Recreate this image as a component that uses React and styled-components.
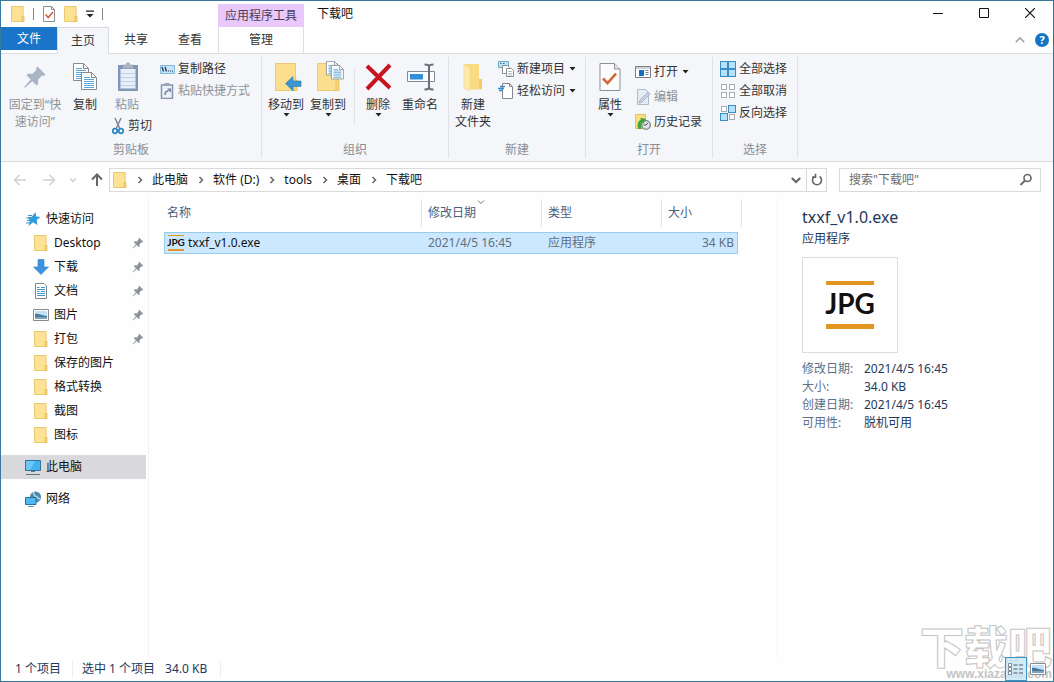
import React, { useState } from 'react';
import styled, { createGlobalStyle } from 'styled-components';

/* ---------- icons ---------- */

const Folder = ({ w = 14, h = 16 }) => (
  <svg width={w} height={h} viewBox="0 0 14 16">
    <path d="M.5 .5h11.6v15H.5z" fill="#fbe294" stroke="#e8c970" />
    <path d="M11 10.5h2v5h-2z" fill="#fbdc80" stroke="#e0b850" strokeWidth=".8" />
  </svg>
);

const BigFolder = ({ children }) => (
  <svg width="32" height="32" viewBox="0 0 32 32">
    <path d="M5.5 2.5h20v27h-20z" fill="#fbdf8c" stroke="#ecc974" />
    <path d="M24 19h3v10.500h-3z" fill="#f9d775" stroke="#e3bd60" strokeWidth=".8" />
    {children}
  </svg>
);

const CheckDoc = ({ big }) => (
  <svg width={big ? 32 : 14} height={big ? 32 : 16} viewBox={big ? '0 0 24 32' : '0 0 14 16'}>
    {big ? (
      <>
        <path d="M2 2.500h14.500L22 8v21.500H2z" fill="#fcfcfd" stroke="#8c8f93" />
        <path d="M16.500 2.500V8H22" fill="#e5e7ea" stroke="#8c8f93" />
        <path d="M5 17.500l4.500 4.700 8.500-9.500" fill="none" stroke="#cf6a3c" strokeWidth="2.600" />
      </>
    ) : (
      <>
        <path d="M1.500 .5h8l3 3v12h-11z" fill="#fff" stroke="#8a8d91" />
        <path d="M9.500 .5v3h3" fill="none" stroke="#8a8d91" />
        <path d="M3.500 8.500l2.700 3 4.800-5.500" fill="none" stroke="#d2603a" strokeWidth="1.700" />
      </>
    )}
  </svg>
);

const Caret = () => (
  <svg width="7" height="4" viewBox="0 0 7 4">
    <path d="M.5 0h6l-3 3.500z" fill="#222" />
  </svg>
);

const Chevron = ({ dir = 'right', color = '#666', size = 10, stroke = 1.5 }) => {
  const turn = { right: 0, down: 90, left: 180, up: 270 }[dir];
  return (
    <svg width={size} height={size} viewBox="0 0 10 10" fill="none" stroke={color} strokeWidth={stroke}>
      <path d="M3.500 2l3 3-3 3" transform={`rotate(${turn} 5 5)`} />
    </svg>
  );
};

const Arrow = ({ dir = 'left', color, stroke = 1.5 }) => {
  const turn = { left: 0, up: 90, right: 180 }[dir];
  return (
    <svg width="14" height="14" viewBox="0 0 14 14" fill="none" stroke={color} strokeWidth={stroke}>
      <path d="M13 7H1.500M6.500 2L1.500 7l5 5" transform={`rotate(${turn} 7 7)`} />
    </svg>
  );
};

const Pin = ({ size = 12, color = '#8b939d' }) => (
  <svg width={size} height={size} viewBox="0 0 12 12">
    <path
      d="M7.300 .8L11.200 4.700l-.8 .8-.9-.2-2 2.100 .2 1.900-.9 .9-2.100-2.100L1 11.400.6 11l3.300-3.700-2.100-2.100 .9-.9 1.900.2L6.700 2.500l-.2-.9z"
      fill={color}
    />
  </svg>
);

const Sheet = ({ x, y, s = 1 }) => (
  <g transform={`translate(${x} ${y}) scale(${s})`}>
    <path d="M.5 .5h10l5 5v12H.5z" fill="#fff" stroke="#858a90" />
    <path d="M10.500 .5v5h5" fill="none" stroke="#858a90" />
    <path d="M3 5.500h6M3 7.500h10M3 9.500h10M3 11.500h10M3 13.500h10M3 15.500h10" stroke="#5ba6d8" />
  </g>
);

const Copy = () => (
  <svg width="32" height="32" viewBox="0 0 32 32">
    <Sheet x={4} y={2} />
    <Sheet x={12} y={11} />
  </svg>
);

const Clipboard = () => (
  <svg width="32" height="32" viewBox="0 0 32 32">
    <path d="M7.500 4.500h19v25h-19z" fill="#8298bb" stroke="#7f93b6" />
    <path d="M9.500 8h15v19.500h-15z" fill="#e9eff8" />
    <path d="M10 12.500h14M10 16.500h14M10 20.500h14M10 24.500h14" stroke="#c3d0e4" />
    <path d="M12 3.500h3c0-3 4-3 4 0h3v4H12z" fill="#a9b2c0" />
  </svg>
);

const Scissors = () => (
  <svg width="16" height="18" viewBox="0 0 16 18" fill="none">
    <path d="M6 1l5 11M12 1L7 12" stroke="#7b8793" strokeWidth="1.500" />
    <ellipse cx="6" cy="14" rx="2.200" ry="2.300" stroke="#2c86c0" strokeWidth="1.700" />
    <ellipse cx="12" cy="14" rx="2.200" ry="2.300" stroke="#2c86c0" strokeWidth="1.700" />
  </svg>
);

const PathIcon = () => (
  <svg width="16" height="16" viewBox="0 0 16 16">
    <path d="M1.500 4.500h14v8h-14z" fill="#c3e4f8" stroke="#84b6d8" />
    <path d="M3 6l1.500 4.500M6 6l1.500 4.500" stroke="#223b52" strokeWidth="1.300" />
    <path d="M9 10h1M11 10h1M13 10h1" stroke="#223b52" />
  </svg>
);

const PasteLink = () => (
  <svg width="16" height="16" viewBox="0 0 16 16">
    <path d="M2.500 2h11v13.500h-11z" fill="#eef2f8" stroke="#8494b0" strokeWidth="1.500" />
    <path d="M5.500 0h5v3h-5z" fill="#9aa5b6" />
    <path d="M6 12c0-3 1-4 3.500-4" fill="none" stroke="#6b7f9f" strokeWidth="1.500" />
    <path d="M8 5.500h4v4.200z" fill="#6b7f9f" />
  </svg>
);

const MoveTo = () => (
  <BigFolder>
    <path d="M15.500 22.500l7.500-7v4.500h8v5.500h-8V30z" fill="#3d94d1" stroke="#2d7fba" strokeWidth=".6" />
  </BigFolder>
);

const CopyTo = () => (
  <BigFolder>
    <Sheet x={14} y={0} s={0.8} />
    <Sheet x={19} y={4} s={0.8} />
  </BigFolder>
);

const Delete = () => (
  <svg width="32" height="32" viewBox="0 0 32 32">
    <path d="M5 5L28 27M28 4L5 28" stroke="#c81420" strokeWidth="4" fill="none" />
  </svg>
);

const Rename = () => (
  <svg width="32" height="32" viewBox="0 0 32 32" fill="none">
    <path d="M3.500 10.500h27v10h-27z" fill="#fafcfe" stroke="#7f8c98" />
    <path d="M6 13h13v5.500H6z" fill="#2f8fd8" />
    <path d="M20.500 3.500c3 0 4 .5 4.500 1.500.5-1 1.500-1.500 4.500-1.500M25 5v22M20.500 28.500c3 0 4-.5 4.500-1.500.5 1 1.500 1.500 4.500 1.500" stroke="#6b7075" strokeWidth="2" />
  </svg>
);

const NewFolder = () => (
  <svg width="32" height="32" viewBox="0 0 32 32">
    <path d="M8 3h14v21l3 .5v4H8z" fill="#fadb83" />
    <path d="M22 18h3v10h-3z" fill="#f3ca66" />
    <path d="M7 3l6 4v23l-6-3z" fill="#fdebad" stroke="#f1d58a" strokeWidth=".6" />
  </svg>
);

const NewItem = () => (
  <svg width="16" height="18" viewBox="0 0 16 18">
    <path d="M.5 1.500h10v6H.5z" fill="#bfe3f8" stroke="#6fa4c4" />
    <path d="M2 3.500h1.500M5 3.500h1.500" stroke="#2b6f9d" />
    <path d="M4.500 5.500h5l2 2v6h-7z" fill="#fff" stroke="#8b9095" />
    <path d="M8.500 8.500h5l2 2v6h-7z" fill="#fff" stroke="#8b9095" />
    <path d="M10 11.500h4M10 13.500h4M10 15.200h4" stroke="#a7adb3" strokeWidth=".8" />
  </svg>
);

const EasyAccess = () => (
  <svg width="16" height="16" viewBox="0 0 16 16">
    <path d="M4.500 .5h7l3 3v12h-10z" fill="#fff" stroke="#85898e" />
    <path d="M11.500 .5v3h3" fill="none" stroke="#85898e" />
    <path d="M2 3.500h5M0 5.500h6M1 7.500h4" stroke="#3c87c4" strokeWidth="1.300" />
  </svg>
);

const OpenIcon = () => (
  <svg width="16" height="14" viewBox="0 0 16 14">
    <path d="M.5 1.500h15v11H.5z" fill="#fff" stroke="#777d83" />
    <path d="M1 3h14" stroke="#a4a9ae" />
    <path d="M4 5h5v6H4z" fill="#1470b8" />
    <path d="M10.500 5.500h3M10.500 7.500h3M10.500 9.500h3" stroke="#6b8ba5" />
  </svg>
);

const EditIcon = () => (
  <svg width="16" height="16" viewBox="0 0 16 16">
    <path d="M2.500 .5h8l3 3v12h-11z" fill="#e6ecf6" stroke="#afb9ca" />
    <path d="M4 14l1-3 8-8 2 2-8 8z" fill="#c8d2e4" stroke="#9dabc4" strokeWidth=".8" />
  </svg>
);

const HistoryIcon = () => (
  <svg width="16" height="16" viewBox="0 0 16 16">
    <path d="M.5 .5h10v14H.5z" fill="#fadf83" stroke="#e2c263" />
    <circle cx="11" cy="11" r="4.300" fill="#dfe3e6" stroke="#7c8389" strokeWidth="1.300" />
    <path d="M11 11l2-2M11 11H8.500" stroke="#555" />
    <path d="M3.500 15C1.500 11 3 7 6 5.500L5 4l6 .8-2.500 5L7.500 8c-2 1.500-2 4-.8 7z" fill="#3fa33e" />
  </svg>
);

const SelectIcon = ({ on }) => (
  <svg width="16" height="16" viewBox="0 0 16 16">
    {[[0.5, 0.5], [8.5, 0.5], [0.5, 8.5], [8.5, 8.5]].map(([x, y], i) => (
      <rect
        key={i}
        x={x + (on[i] ? 0 : 1)}
        y={y + (on[i] ? 0 : 1)}
        width={on[i] ? 7 : 5}
        height={on[i] ? 7 : 5}
        fill={on[i] ? '#b5e2fa' : '#fff'}
        stroke={on[i] ? '#3a8dc4' : '#a9adb2'}
      />
    ))}
  </svg>
);

const Star = () => (
  <svg width="16" height="16" viewBox="0 0 16 16">
    <path d="M10.500 1l.6 4.500 4.400.6-3.800 3 .6 5-4.300-2.800L3.500 15l1.500-5.500L2.500 6.600l4.300-.8z" fill="#2f9cdf" />
    <path d="M3 4.500h4M1.500 7h4M2 9.500h3M1 12h4" stroke="#3b92cc" />
  </svg>
);

const Download = () => (
  <svg width="16" height="16" viewBox="0 0 16 16">
    <path d="M5 .5h6V8h4.500L8 15.500.5 8H5z" fill="#3c92de" stroke="#2f7fc6" strokeWidth=".6" />
  </svg>
);

const DocIcon = () => (
  <svg width="16" height="16" viewBox="0 0 16 16">
    <path d="M2.500 .5h8.500l2.500 2.500v12.500h-11z" fill="#fff" stroke="#7f868d" />
    <path d="M8 4.500h4M4 4.500h2.500M4 6.500h8M8 8.500h4M4 8.500h2.500M4 10.500h8M4 12.500h8" stroke="#3f97cc" />
  </svg>
);

const PictureIcon = () => (
  <svg width="16" height="14" viewBox="0 0 16 14">
    <path d="M.5 1.500h15v11H.5z" fill="#fff" stroke="#858b91" />
    <path d="M2 3h12v8H2z" fill="#c4e2f6" />
    <path d="M2 6c3-1 5 1 12 2v3H2z" fill="#4b7b9b" />
    <path d="M2 9h12v2H2z" fill="#7ba3bd" />
  </svg>
);

const Computer = () => (
  <svg width="16" height="16" viewBox="0 0 16 16">
    <path d="M.5 1.500h15v10H.5z" fill="#43b1ee" stroke="#31719b" />
    <path d="M1 2h9L5 11H1z" fill="#6cc8f8" />
    <path d="M6 12.500h4M1 15.500h14" stroke="#56768c" />
  </svg>
);

const Network = () => (
  <svg width="16" height="16" viewBox="0 0 16 16">
    <circle cx="10.500" cy="6" r="5.500" fill="#4a88ae" />
    <path d="M8 1.500c2 1 0 3 3 4s2 3 4 2" fill="none" stroke="#b7dbe8" strokeWidth="1.600" />
    <path d="M.5 6.500h10.500v7H.500z" fill="#4fbaf2" stroke="#27729f" />
    <path d="M3 15.500h6" stroke="#6c9cb8" />
  </svg>
);

const Search = () => (
  <svg width="14" height="14" viewBox="0 0 14 14" fill="none" stroke="#6b6b6b" strokeWidth="1.700">
    <circle cx="8.500" cy="5" r="3.500" />
    <path d="M6 7.500L1.500 12" strokeWidth="2" />
  </svg>
);

const Refresh = () => (
  <svg width="12" height="14" viewBox="0 0 12 14" fill="none" stroke="#666" strokeWidth="1.600">
    <path d="M3.500 3.500a4.500 4.500 0 1 0 5 0" />
    <path d="M4.500 .8v3.400H1" />
  </svg>
);

const DetailsView = () => (
  <svg width="16" height="14" viewBox="0 0 16 14" fill="none">
    <path d="M.5 1.500h3v3h-3zM.5 5.500h3v3h-3zM.5 9.500h3v3h-3z" fill="#fff" stroke="#737f88" strokeWidth=".9" />
    <path d="M5.500 3h4M11 3h4M5.500 7h4M11 7h4M5.500 11h4M11 11h4" stroke="#4d5b66" />
  </svg>
);

/* ---------- window ---------- */

const App = () => {
  const [query, setQuery] = useState('');

  return (
    <>
      <GlobalStyle />
      <Window>
        <TitleBar>
          <QuickBar>
            <Folder />
            <QuickLine />
            <IconButton aria-label="属性"><CheckDoc /></IconButton>
            <IconButton aria-label="新建文件夹"><Folder /></IconButton>
            <IconButton aria-label="自定义快速访问工具栏">
              <svg width="8" height="8" viewBox="0 0 8 8">
                <path d="M0 .5h8v1.200H0zM.5 4h7L4 7.500z" fill="#222" />
              </svg>
            </IconButton>
            <QuickLine />
          </QuickBar>
          <ContextLabel>应用程序工具</ContextLabel>
          <WindowTitle>下载吧</WindowTitle>
          <WindowButton aria-label="最小化">
            <svg width="10" height="10"><path d="M0 5.500h10" stroke="#111" /></svg>
          </WindowButton>
          <WindowButton aria-label="最大化">
            <svg width="10" height="10"><path d="M.5 .5h9v9h-9z" fill="none" stroke="#111" /></svg>
          </WindowButton>
          <WindowButton aria-label="关闭">
            <svg width="10" height="10"><path d="M0 0l10 10M10 0L0 10" stroke="#111" strokeWidth="1.200" /></svg>
          </WindowButton>
        </TitleBar>

        <Tabs>
          <FileTab>文件</FileTab>
          <Tab $active>主页</Tab>
          <Tab>共享</Tab>
          <Tab>查看</Tab>
          <ContextTab>管理</ContextTab>
          <TabTools>
            <IconButton aria-label="最小化功能区"><Chevron dir="up" color="#a2a2a2" size={14} stroke={1.1} /></IconButton>
            <HelpButton aria-label="帮助">?</HelpButton>
          </TabTools>
        </Tabs>

        <Ribbon>
          <Group $width={261}>
            <GroupBody>
              <BigButton $width={62} disabled><Pin size={24} color="#a9b4c4" />固定到“快<br />速访问”</BigButton>
              <BigButton $width={38}><Copy />复制</BigButton>
              <PasteColumn>
                <BigButton $width={46} disabled><Clipboard />粘贴</BigButton>
                <CutButton><Scissors />剪切</CutButton>
              </PasteColumn>
              <SmallColumn>
                <SmallButton><PathIcon />复制路径</SmallButton>
                <SmallButton disabled><PasteLink />粘贴快捷方式</SmallButton>
              </SmallColumn>
            </GroupBody>
            <GroupLabel>剪贴板</GroupLabel>
          </Group>
          <Group $width={187}>
            <GroupBody>
              <BigButton><MoveTo />移动到<Caret /></BigButton>
              <BigButton><CopyTo />复制到<Caret /></BigButton>
              <InnerLine />
              <BigButton><Delete />删除<Caret /></BigButton>
              <BigButton><Rename />重命名</BigButton>
            </GroupBody>
            <GroupLabel>组织</GroupLabel>
          </Group>
          <Group $width={137}>
            <GroupBody>
              <BigButton><NewFolder />新建<br />文件夹</BigButton>
              <SmallColumn>
                <SmallButton><NewItem />新建项目<MenuMark><Caret /></MenuMark></SmallButton>
                <SmallButton><EasyAccess />轻松访问<MenuMark><Caret /></MenuMark></SmallButton>
              </SmallColumn>
            </GroupBody>
            <GroupLabel>新建</GroupLabel>
          </Group>
          <Group $width={127}>
            <GroupBody>
              <BigButton><CheckDoc big />属性<Caret /></BigButton>
              <SmallColumn $loose>
                <SmallButton><OpenIcon />打开<MenuMark><Caret /></MenuMark></SmallButton>
                <SmallButton disabled><EditIcon />编辑</SmallButton>
                <SmallButton><HistoryIcon />历史记录</SmallButton>
              </SmallColumn>
            </GroupBody>
            <GroupLabel>打开</GroupLabel>
          </Group>
          <Group $width={85}>
            <GroupBody>
              <SmallColumn>
                <SmallButton><SelectIcon on={[1, 1, 1, 1]} />全部选择</SmallButton>
                <SmallButton><SelectIcon on={[0, 0, 0, 0]} />全部取消</SmallButton>
                <SmallButton><SelectIcon on={[0, 1, 1, 0]} />反向选择</SmallButton>
              </SmallColumn>
            </GroupBody>
            <GroupLabel>选择</GroupLabel>
          </Group>
        </Ribbon>

        <AddressRow>
          <HistoryNav>
            <HistoryButton aria-label="后退"><Arrow color="#d0d0d0" /></HistoryButton>
            <HistoryButton aria-label="前进"><Arrow dir="right" color="#d0d0d0" /></HistoryButton>
            <IconButton aria-label="最近浏览的位置"><Chevron dir="down" color="#d0d0d0" /></IconButton>
            <HistoryButton aria-label="向上"><Arrow dir="up" color="#666" stroke={2} /></HistoryButton>
          </HistoryNav>
          <AddressBox>
            <Folder />
            {['此电脑', '软件 (D:)', 'tools', '桌面', '下载吧'].map((name) => (
              <React.Fragment key={name}>
                <Crumb><Chevron /></Crumb>
                <CrumbLink href="#">{name}</CrumbLink>
              </React.Fragment>
            ))}
            <AddressDrop aria-label="以前的位置"><Chevron dir="down" size={14} stroke={1.5} /></AddressDrop>
            <RefreshButton aria-label="刷新"><Refresh /></RefreshButton>
          </AddressBox>
          <SearchBox>
            <SearchInput
              aria-label="搜索"
              placeholder={'搜索"下载吧"'}
              value={query}
              onChange={(e) => setQuery(e.target.value)}
            />
            <Search />
          </SearchBox>
        </AddressRow>

        <Main>
          <NavPane>
            <NavItem href="#"><Star />快速访问</NavItem>
            {quickAccess.map(({ name, icon: Icon, pinned }) => (
              <NavItem key={name} href="#" $child>
                <Icon />
                {name}
                {pinned && <PinMark><Pin /></PinMark>}
              </NavItem>
            ))}
            <NavItem href="#" $root $selected><Computer />此电脑</NavItem>
            <NavItem href="#" $root><Network />网络</NavItem>
          </NavPane>

          <FileList>
            <FileTable>
              <colgroup>
                <col width="258" />
                <col width="120" />
                <col width="120" />
                <col width="76" />
                <col width="4" />
              </colgroup>
              <thead>
                <tr>
                  <HeadCell $first>名称</HeadCell>
                  <HeadCell>
                    修改日期
                    <SortMark><Chevron dir="down" color="#777" stroke={1} /></SortMark>
                  </HeadCell>
                  <HeadCell>类型</HeadCell>
                  <HeadCell colSpan={2}>大小</HeadCell>
                </tr>
              </thead>
              <tbody>
                <FileRow>
                  <FileCell>
                    <FileName><SmallJpg>JPG</SmallJpg>txxf_v1.0.exe</FileName>
                  </FileCell>
                  <FileCell>2021/4/5 16:45</FileCell>
                  <FileCell>应用程序</FileCell>
                  <FileCell $right>34 KB</FileCell>
                </FileRow>
              </tbody>
            </FileTable>
          </FileList>

          <DetailsPane>
            <DetailsTitle>txxf_v1.0.exe</DetailsTitle>
            <DetailsType>应用程序</DetailsType>
            <Thumb><BigJpg>JPG</BigJpg></Thumb>
            <Facts>
              <dt>修改日期:</dt><dd>2021/4/5 16:45</dd>
              <dt>大小:</dt><dd>34.0 KB</dd>
              <dt>创建日期:</dt><dd>2021/4/5 16:45</dd>
              <dt>可用性:</dt><dd>脱机可用</dd>
            </Facts>
          </DetailsPane>
        </Main>

        <StatusBar>
          <StatusCount>1 个项目</StatusCount>
          <StatusSelection>选中 1 个项目<span>34.0 KB</span></StatusSelection>
          <ViewButtons>
            <ViewButton $active aria-label="详细信息"><DetailsView /></ViewButton>
            <ViewButton aria-label="大图标"><PictureIcon /></ViewButton>
          </ViewButtons>
        </StatusBar>

        <Watermark>
          下载吧
          <small>www.xiazaiba.com</small>
        </Watermark>
      </Window>
    </>
  );
};

const quickAccess = [
  { name: 'Desktop', icon: Folder, pinned: true },
  { name: '下载', icon: Download, pinned: true },
  { name: '文档', icon: DocIcon, pinned: true },
  { name: '图片', icon: PictureIcon, pinned: true },
  { name: '打包', icon: Folder, pinned: true },
  { name: '保存的图片', icon: Folder },
  { name: '格式转换', icon: Folder },
  { name: '截图', icon: Folder },
  { name: '图标', icon: Folder },
];

const GlobalStyle = createGlobalStyle`
  * {
    box-sizing: border-box;
  }

  body {
    margin: 0;
    background: #fff;
    font-family: "Noto Sans", "Noto Sans CJK SC", sans-serif;
    font-size: 12px;
    line-height: 18px;
    color: #111;
  }

  button, input {
    font: inherit;
    color: inherit;
    padding: 0;
    border: none;
    background: none;
  }

  svg {
    display: block;
    flex-shrink: 0;
  }
`;

const Window = styled.div`
  position: relative;
  display: flex;
  flex-direction: column;
  min-height: 100vh;
  border: 1px solid #38799f;
  border-right-color: #23808a;
  background: #fefefe;
  overflow: hidden;
`;

const TitleBar = styled.header`
  display: flex;
  height: 26px;
`;

const QuickBar = styled.div`
  display: flex;
  align-items: center;
  width: 217px;
  padding-left: 10px;
  gap: 8px;
`;

const QuickLine = styled.span`
  width: 1px;
  height: 12px;
  background: #888;
`;

const IconButton = styled.button`
  display: flex;
  align-items: center;
  justify-content: center;
`;

const ContextLabel = styled.div`
  width: 86px;
  margin-top: 3px;
  line-height: 23px;
  text-align: center;
  color: #4a3b58;
  background: #e9c9fb;
`;

const WindowTitle = styled.h1`
  flex: 1;
  margin: 0;
  padding-left: 13px;
  font-size: 12px;
  font-weight: 400;
  line-height: 26px;
`;

const WindowButton = styled.button`
  display: flex;
  align-items: center;
  justify-content: center;
  width: 46px;
  height: 24px;

  &:hover {
    background: #e5e5e5;
  }
`;

const Tabs = styled.nav`
  display: flex;
  height: 26px;
`;

const Tab = styled.button`
  width: ${(p) => (p.$active ? '52px' : '54px')};
  height: ${(p) => (p.$active ? '27px' : '26px')};
  color: #333;
  ${(p) => p.$active && `
    z-index: 1;
    background: #f4f6fa;
    border: solid #dadcdf;
    border-width: 1px 1px 0;
  `}
`;

const FileTab = styled(Tab)`
  width: 56px;
  height: 23px;
  color: #fff;
  background: #1a75c8;
`;

const ContextTab = styled(Tab)`
  width: 86px;
  margin-left: 1px;
  border: solid #e0e0e2;
  border-width: 0 1px;
`;

const TabTools = styled.div`
  display: flex;
  align-items: center;
  gap: 8px;
  margin-left: auto;
  padding-right: 4px;
`;

const HelpButton = styled.button`
  width: 14px;
  height: 14px;
  border-radius: 50%;
  color: #fff;
  background: #1474c4;
  font-size: 11px;
  font-weight: 700;
  line-height: 14px;
`;

const Ribbon = styled.div`
  display: flex;
  background: #f4f6fa;
  border: solid #dadcdf;
  border-width: 1px 0;
`;

const Group = styled.section`
  display: flex;
  flex-direction: column;
  width: ${(p) => p.$width}px;
  height: 101px;
  margin: 3px 0;
  padding: 0 3px;
  border-right: 1px solid #dfe1e4;
`;

const GroupBody = styled.div`
  display: flex;
  height: 84px;
  flex-shrink: 0;
`;

const GroupLabel = styled.div`
  text-align: center;
  color: #8b8e93;
`;

const BigButton = styled.button`
  display: flex;
  flex-direction: column;
  align-items: center;
  width: ${(p) => p.$width || 42}px;
  height: 60px;
  padding-top: 4px;
  line-height: 17px;
  white-space: nowrap;
  color: ${(p) => (p.disabled ? '#8f9297' : '#333')};

  svg:first-child {
    height: 32px;
    margin-bottom: 3px;
  }
`;

const PasteColumn = styled.div`
  width: 51px;
`;

const SmallColumn = styled.div`
  margin-left: 4px;
  padding-top: ${(p) => (p.$loose ? '2px' : '1px')};

  button {
    height: ${(p) => (p.$loose ? '25px' : '22px')};
  }
`;

const SmallButton = styled.button`
  display: flex;
  align-items: center;
  gap: 3px;
  white-space: nowrap;
  color: ${(p) => (p.disabled ? '#8f9297' : '#333')};
`;

const CutButton = styled(SmallButton)`
  margin-left: 5px;
`;

const MenuMark = styled.span`
  margin-left: 1px;
`;

const InnerLine = styled.span`
  width: 1px;
  height: 55px;
  margin: 12px 2px 0 5px;
  background: #e0e2e5;
`;

const AddressRow = styled.div`
  display: flex;
  align-items: center;
  height: 36px;
  padding-right: 12px;
`;

const HistoryNav = styled.div`
  display: flex;
  align-items: center;
  width: 108px;
  padding-left: 9px;
  gap: 9px;
`;

const HistoryButton = styled(IconButton)`
  width: 20px;
`;

const AddressBox = styled.div`
  display: flex;
  align-items: center;
  flex: 1;
  height: 24px;
  padding-left: 3px;
  border: 1px solid #d9d9d9;
`;

const Crumb = styled.span`
  display: flex;
  justify-content: center;
  width: 25px;
`;

const CrumbLink = styled.a`
  color: #111;
  text-decoration: none;
`;

const AddressDrop = styled(IconButton)`
  width: 20px;
  margin-left: auto;
`;

const RefreshButton = styled(IconButton)`
  width: 20px;
  height: 22px;
  border-left: 1px solid #d9d9d9;
`;

const SearchBox = styled.label`
  display: flex;
  align-items: center;
  width: 202px;
  height: 24px;
  margin-left: 12px;
  padding: 0 7px 0 9px;
  border: 1px solid #d9d9d9;
`;

const SearchInput = styled.input`
  flex: 1;
  min-width: 0;
  outline: none;

  &::placeholder {
    color: #6d6d6d;
    opacity: 1;
  }
`;

const Main = styled.main`
  display: flex;
  flex: 1;
`;

const NavPane = styled.nav`
  width: 148px;
  padding: 9px 2px 0 0;
  border-right: 1px solid #f2f2f4;
`;

const NavItem = styled.a`
  display: flex;
  align-items: center;
  gap: 5px;
  height: 24px;
  margin-top: ${(p) => (p.$root ? '8px' : '0')};
  padding-left: ${(p) => (p.$child ? '32px' : '24px')};
  color: #111;
  text-decoration: none;
  background: ${(p) => (p.$selected ? '#d9d9db' : 'none')};

  svg:first-child {
    width: 16px;
  }
`;

const PinMark = styled.span`
  display: flex;
  justify-content: center;
  width: 16px;
  margin-left: auto;

  svg:first-child {
    width: 12px;
  }
`;

const FileList = styled.div`
  flex: 1;
  padding: 1px 0 0 15px;
`;

const FileTable = styled.table`
  width: 578px;
  table-layout: fixed;
  border-collapse: separate;
  border-spacing: 0;

  thead::after {
    content: "";
    display: block;
    height: 5px;
  }
`;

const HeadCell = styled.th`
  position: relative;
  height: 28px;
  padding: 0 0 0 ${(p) => (p.$first ? '3px' : '6px')};
  border-right: 1px solid #e4e6e9;
  color: #4c607a;
  font-weight: 400;
  text-align: left;
`;

const SortMark = styled.span`
  position: absolute;
  top: -2px;
  left: 54px;
`;

const FileRow = styled.tr`
  color: #5f6f80;
`;

const FileCell = styled.td`
  height: 22px;
  padding: 0 ${(p) => (p.$right ? '3px' : '0')} 0 6px;
  border: solid #99cbec;
  border-width: 1px 0;
  background: #cce8ff;
  text-align: ${(p) => (p.$right ? 'right' : 'left')};

  &:first-child {
    padding-left: 3px;
    border-left-width: 1px;
  }

  &:last-child {
    border-right-width: 1px;
  }
`;

const FileName = styled.div`
  display: flex;
  align-items: center;
  gap: 4px;
  color: #111;
`;

const SmallJpg = styled.span`
  display: flex;
  justify-content: center;
  width: 16px;
  height: 16px;
  border-top: 1px solid #e2972a;
  border-bottom: 2px solid #e2972a;
  font: 700 10px/12px Lato, sans-serif;
`;

const DetailsPane = styled.aside`
  width: 276px;
  padding: 7px 0 0 24px;
  border-left: 1px solid #f5f5f7;
  color: #1e395b;
`;

const DetailsTitle = styled.h2`
  margin: 0;
  font-size: 16px;
  font-weight: 400;
  line-height: 24px;
`;

const DetailsType = styled.div`
  line-height: 20px;
`;

const Thumb = styled.div`
  display: flex;
  align-items: center;
  justify-content: center;
  width: 96px;
  height: 96px;
  margin: 8px 0 7px;
  border: 1px solid #dcdde0;
`;

const BigJpg = styled.div`
  display: flex;
  justify-content: center;
  width: 48px;
  height: 48px;
  border: solid #e29620;
  border-width: 4px 0 5px;
  color: #111;
  font: 700 28px/36px Lato, sans-serif;
`;

const Facts = styled.dl`
  display: grid;
  grid-template-columns: 62px 1fr;
  margin: 0;

  dt {
    color: #5d7088;
  }

  dd {
    margin: 0;
  }
`;

const StatusBar = styled.footer`
  display: flex;
  align-items: center;
  height: 24px;
  color: #1e395b;
`;

const StatusCount = styled.div`
  width: 72px;
  padding-left: 14px;
  border-right: 1px solid #eceef0;
`;

const StatusSelection = styled.div`
  width: 148px;
  padding-left: 9px;
  border-right: 1px solid #eceef0;

  span {
    margin-left: 10px;
  }
`;

const ViewButtons = styled.div`
  display: flex;
  margin-left: auto;
  padding-right: 4px;
  z-index: 1;
`;

const ViewButton = styled(IconButton)`
  width: 22px;
  height: 24px;
  ${(p) => p.$active && `
    border: 1px solid #3b94c2;
    background: #c5e6f8cc;
  `}
`;

const Watermark = styled.div`
  position: absolute;
  right: 1px;
  bottom: 0;
  text-align: right;
  font: 900 44px/44px "Noto Sans CJK SC", sans-serif;
  color: #fff;
  -webkit-text-stroke: 1px #c4c4c4;
  pointer-events: none;

  small {
    display: block;
    font: 700 12px/14px "Liberation Sans", sans-serif;
    color: #c4c4c4;
    -webkit-text-stroke: 0;
  }
`;

export default App;
